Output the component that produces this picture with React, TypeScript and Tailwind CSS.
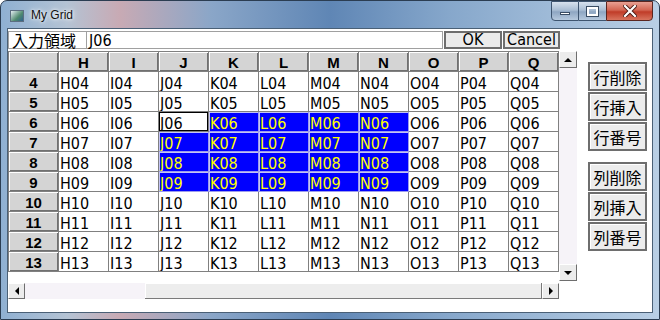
import React from "react";

const COLS = ["H", "I", "J", "K", "L", "M", "N", "O", "P", "Q"];
const ROWS = [4, 5, 6, 7, 8, 9, 10, 11, 12, 13];

const isSelected = (col: string, row: number) => {
  if (row >= 6 && row <= 9 && "KLMN".includes(col)) return true;
  if (col === "J" && row >= 7 && row <= 9) return true;
  return false;
};

const pad = (n: number) => (n < 10 ? "0" + n : "" + n);

function Arrow({ dir }: { dir: "up" | "down" | "left" | "right" }) {
  const pts = {
    up: "0,5 4,1 8,5",
    down: "0,1 8,1 4,5",
    left: "5,0 5,8 1,4",
    right: "1,0 1,8 5,4",
  }[dir];
  const horiz = dir === "left" || dir === "right";
  return (
    <svg width={horiz ? 6 : 8} height={horiz ? 8 : 6} viewBox={horiz ? "0 0 6 8" : "0 0 8 6"}>
      <polygon points={pts} fill="#000" />
    </svg>
  );
}

function ArrowBtn({ dir, className }: { dir: "up" | "down" | "left" | "right"; className: string }) {
  return (
    <div
      className={
        "flex items-center justify-center bg-[#ececec] border-t border-l border-t-white border-l-white border-r border-b border-r-[#6e6e6e] border-b-[#6e6e6e] " +
        className
      }
    >
      <Arrow dir={dir} />
    </div>
  );
}

function SideButton({ label }: { label: string }) {
  return (
    <div className="h-[29px] w-[59px] flex items-center justify-center border-2 border-[#6e6e6e] bg-[#ececec] shadow-[inset_1px_1px_0_#ffffff] font-['Noto_Sans_CJK_JP',sans-serif] text-[16px] leading-none text-black">
      {label}
    </div>
  );
}

function TitleButtons() {
  return (
    <div className="flex self-start">
      <div className="w-[28px] h-[20px] flex items-end justify-center pb-[5px] border border-[#3e5570] rounded-bl-[4px] bg-[linear-gradient(180deg,#d7e2ee,#a9bdd3_45%,#8ea6c2_55%,#b6c9de)]">
        <div className="w-[10px] h-[3px] bg-white border border-[#394c63]" />
      </div>
      <div className="w-[27px] h-[20px] flex items-center justify-center border-y border-[#3e5570] bg-[linear-gradient(180deg,#d7e2ee,#a9bdd3_45%,#8ea6c2_55%,#b6c9de)]">
        <div className="w-[11px] h-[9px] border-2 border-white shadow-[0_0_0_1px_#394c63]" />
      </div>
      <div className="w-[47px] h-[20px] flex items-center justify-center border border-[#5a2620] rounded-br-[4px] bg-[linear-gradient(180deg,#e8a093,#d26552_45%,#c03c28_55%,#d8745e)]">
        <svg width="14" height="12" viewBox="0 0 14 12">
          <path d="M2 1 L12 11 M12 1 L2 11" stroke="#4a1a14" strokeWidth="4" strokeLinecap="square" />
          <path d="M2 1 L12 11 M12 1 L2 11" stroke="#ffffff" strokeWidth="2.2" strokeLinecap="square" />
        </svg>
      </div>
    </div>
  );
}

export default function App() {
  const cellFont = "font-['Liberation_Sans_Narrow','DejaVu_Sans_Condensed','Liberation_Sans',sans-serif]";
  const headerCls =
    "h-[20px] border-r border-b border-[#808080] bg-[#d4d4d4] shadow-[inset_1px_1px_0_#ffffff,inset_-1px_-1px_0_#707070] text-center font-bold text-[15px] leading-[22px] text-black font-['Liberation_Sans',sans-serif]";

  return (
    <div className="w-[660px] h-[320px] overflow-hidden flex flex-col border border-[#2b3d52] rounded-t-[7px] bg-[linear-gradient(90deg,#8fb0d2,#b4c3d4_10%,#c8aab4_18%,#8aa6c8_32%,#5f86b5_50%,#86a7cb_68%,#b9cfe5_100%)]">
      {/* title bar */}
      <div className="h-[27px] flex items-start shrink-0">
        <div className="mt-[9px] ml-[9px] w-[14px] h-[12px] border border-[#5c6e80] bg-[linear-gradient(135deg,#e4ecf2,#4f8a6e_60%,#2f5f8e)]" />
        <div className="mt-[6px] ml-[7px] text-[12px] leading-[16px] text-[#101010] font-['Liberation_Sans',sans-serif] [text-shadow:0_0_6px_#ffffff,0_0_3px_#ffffff]">
          My Grid
        </div>
        <div className="ml-auto mr-[6px]">
          <TitleButtons />
        </div>
      </div>

      {/* client area */}
      <div className="mx-[6px] mb-[6px] flex-1 border border-[#4a6076] bg-white flex flex-col">
        {/* input row */}
        <div className="mt-[2px] h-[18px] flex">
          <div className="w-[79px] h-[18px] border border-[#a0a0a0] flex items-center pl-[3px] font-['Noto_Sans_CJK_JP',sans-serif] text-[16px] leading-none text-black">
            入力領域
          </div>
          <div className={"w-[356px] h-[18px] border-y border-r border-[#a0a0a0] pl-[2px] text-[16px] leading-[18px] text-black " + cellFont}>
            J06
          </div>
          <div className={"ml-[1px] w-[58px] h-[18px] border-2 border-[#6e6e6e] bg-[#ebebeb] flex items-center justify-center text-[16px] leading-none text-black " + cellFont}>
            OK
          </div>
          <div className={"ml-[1px] w-[57px] h-[18px] border-2 border-[#6e6e6e] bg-[#ebebeb] flex items-center justify-center text-[16px] leading-none text-black " + cellFont}>
            Cancel
          </div>
        </div>

        {/* main row */}
        <div className="mt-[2px] flex">
          <div className="w-[551px] flex flex-col">
            <div className="h-[230px]">
              <div className="grid grid-cols-[repeat(11,50px)] border-t border-l border-[#808080] w-[551px]">
                <div className={headerCls} />
                {COLS.map((c) => (
                  <div key={c} className={headerCls}>
                    {c}
                  </div>
                ))}
                {ROWS.map((r) => (
                  <React.Fragment key={r}>
                    <div className={headerCls}>{r}</div>
                    {COLS.map((c) => {
                      const sel = isSelected(c, r);
                      const focus = c === "J" && r === 6;
                      return (
                        <div
                          key={c + r}
                          className={
                            "h-[20px] overflow-hidden border-r border-b pl-[1px] text-[16px] leading-[23px] " +
                            cellFont +
                            (sel
                              ? " bg-[#0000ff] text-[#ffff00] border-[#9c9cec] shadow-[inset_1px_1px_0_#c4c4f6]"
                              : " bg-white text-black border-[#808080]") +
                            (focus ? " shadow-[inset_0_0_0_1px_#000000]" : "")
                          }
                        >
                          {c + pad(r)}
                        </div>
                      );
                    })}
                  </React.Fragment>
                ))}
              </div>
            </div>
            {/* horizontal scrollbar */}
            <div className="mt-[2px] h-[16px] flex">
              <ArrowBtn dir="left" className="w-[17px] h-[16px]" />
              <div className="w-[120px] h-[16px] bg-[#f6f3f8]" />
              <div className="w-[397px] h-[16px] bg-[#ededed] border-b border-r border-[#7a7a7a] shadow-[inset_1px_1px_0_#ffffff]" />
              <ArrowBtn dir="right" className="w-[17px] h-[16px]" />
            </div>
          </div>

          {/* vertical scrollbar */}
          <div className="w-[18px] h-[230px] flex flex-col">
            <ArrowBtn dir="up" className="h-[17px]" />
            <div className="flex-1 bg-[#f6f3f8]" />
            <ArrowBtn dir="down" className="h-[17px]" />
          </div>

          {/* side buttons */}
          <div className="ml-[11px] pt-[11px] flex flex-col gap-[1px]">
            <SideButton label="行削除" />
            <SideButton label="行挿入" />
            <SideButton label="行番号" />
            <div className="h-[9px]" />
            <SideButton label="列削除" />
            <SideButton label="列挿入" />
            <SideButton label="列番号" />
          </div>
        </div>
      </div>
    </div>
  );
}
